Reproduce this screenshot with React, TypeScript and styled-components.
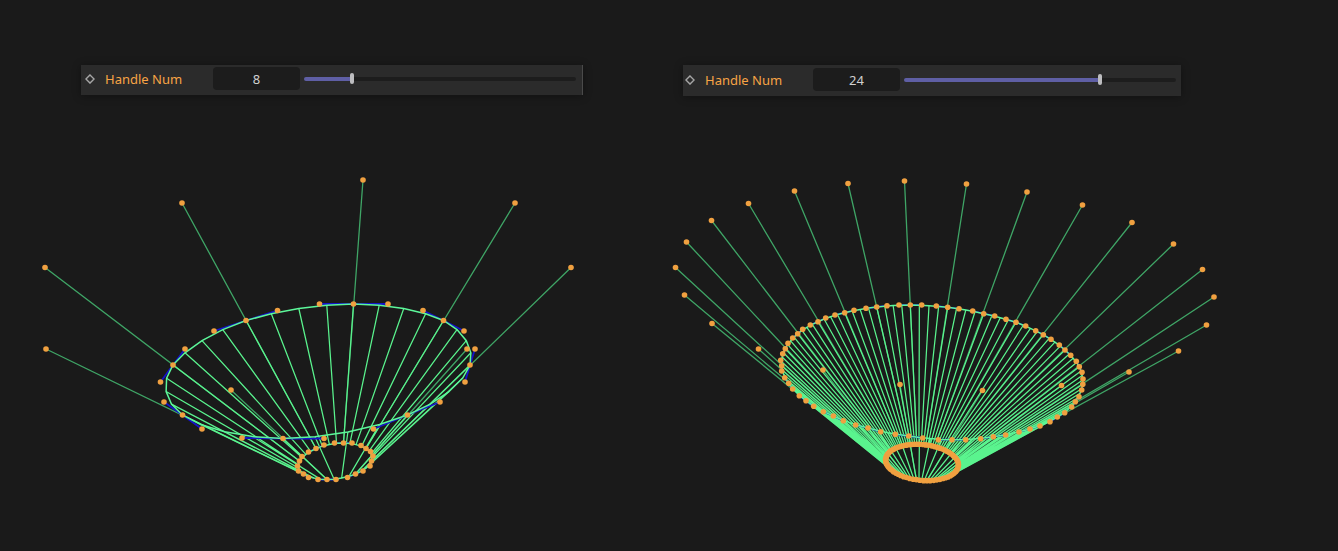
import React, { useId, useState } from "react";
import styled, { createGlobalStyle } from "styled-components";

type Point = [number, number];
/** Spline knot: incoming tangent, anchor, outgoing tangent. */
type Knot = [Point, Point, Point];

const GlobalStyle = createGlobalStyle`
  *, *::before, *::after { box-sizing: border-box; }
  body {
    margin: 0;
    background: #1a1a1a;
    font-family: "Noto Sans", "Open Sans", sans-serif;
  }
`;

const Comparison = styled.main`
  display: grid;
  grid-template-columns: 600fr 738fr;
  align-items: start;
  min-height: 100vh;
  padding-top: 65px;
  background: #1a1a1a;
`;

const Viewport = styled.section`
  display: flex;
  flex-direction: column;
  min-width: 0;
`;

const PropertyRow = styled.div<{ $wide: boolean }>`
  display: flex;
  align-items: center;
  max-width: ${(p) => (p.$wide ? 502 : 498)}px;
  margin: ${(p) => (p.$wide ? "0 16px 0 81px" : "0 16px 0 83px")};
  padding: ${(p) => (p.$wide ? "2px 6px 5px 4px" : "3px 5px 5px 2px")};
  background: #2b2b2b;
  border-right: ${(p) => (p.$wide ? "1px solid #4a4a4a" : "none")};
  box-shadow: 0 1px 8px rgba(0, 0, 0, 0.35);
`;

const KeyframeButton = styled.button`
  display: flex;
  flex: none;
  width: 10px;
  height: 12px;
  padding: 0;
  align-items: center;
  background: none;
  border: 0;
`;

const Label = styled.label`
  flex: none;
  width: 108px;
  padding-left: 10px;
  color: #f8a445;
  font-size: 13px;
  line-height: 20px;
  white-space: nowrap;
`;

const NumberField = styled.input`
  flex: none;
  width: 87px;
  height: 23px;
  margin-left: 10px;
  padding: 0;
  color: #d0d0d0;
  background: #1c1c1c;
  border: 0;
  border-radius: 4px;
  font: 13px/20px "Noto Sans", "Open Sans", sans-serif;
  text-align: center;
`;

const Slider = styled.input<{ $fill: number }>`
  flex: 1;
  min-width: 0;
  height: 11px;
  margin: 0 0 0 4px;
  appearance: none;
  background: transparent;

  &::-webkit-slider-runnable-track {
    height: 4px;
    border-radius: 2px;
    background: linear-gradient(
      to right,
      #5f5fa5 ${(p) => p.$fill}%,
      #1d1d1d ${(p) => p.$fill}%
    );
  }
  &::-webkit-slider-thumb {
    appearance: none;
    width: 4px;
    height: 11px;
    margin-top: -4px;
    border-radius: 2px;
    background: #bdbdc0;
  }
`;

const Drawing = styled.svg`
  display: block;
  width: 100%;
  height: auto;
`;

const MIN = 3;
const MAX = 32;
const STEPS = 4;

const leftRim: Knot[] = [
  [[319.5, 304], [353.5, 304], [388, 304]],
  [[423, 310.5], [443.5, 320.5], [464, 331]],
  [[475, 349], [470, 365], [465, 382]],
  [[440, 402], [407.5, 415], [373.5, 429]],
  [[324, 438.5], [283, 438.5], [242, 438]],
  [[202, 429], [182.5, 415], [164, 402]],
  [[160.5, 382], [173, 365], [185, 349]],
  [[214, 331], [246, 320.5], [277.5, 310.5]],
];

const leftBase: Knot[] = [
  [[334.5, 443], [343.5, 443], [352, 443]],
  [[361, 445.5], [366, 448.5], [370.5, 451.5]],
  [[373, 456], [371.5, 461], [370, 466]],
  [[363, 471], [355.5, 474], [347.5, 477.5]],
  [[336, 479.5], [327, 479.5], [318, 479.5]],
  [[308.5, 477.5], [303.5, 474], [298.5, 471]],
  [[297.5, 466], [299.5, 461], [302, 456.5]],
  [[308.5, 452], [316, 448.5], [324, 445]],
];

const leftTips: Point[] = [
  [363, 180], [515, 203], [571, 267.5], [467, 349],
  [231, 390], [46, 349], [45, 267.5], [182, 203],
];

const rightRim: Knot[] = [
  [[899, 305], [910.3, 305], [921.7, 305]],
  [[936.3, 306], [947.7, 307.3], [959, 308.7]],
  [[972.7, 311], [983.7, 313.7], [994.7, 316]],
  [[1006, 319.3], [1016, 322.3], [1025.7, 326]],
  [[1035.7, 330.7], [1043.3, 334.7], [1051, 339.3]],
  [[1059.3, 345], [1065, 350], [1070.7, 355.3]],
  [[1076.3, 361.3], [1079.3, 366.7], [1082, 372.3]],
  [[1083, 379], [1082.8, 384.3], [1081.7, 390]],
  [[1079, 396.7], [1075.3, 401.7], [1071.7, 407]],
  [[1064.7, 412.7], [1057.3, 417], [1050, 421.7]],
  [[1040, 426], [1030, 429], [1019, 432]],
  [[1005.7, 435], [993.3, 436.7], [980.7, 438.7]],
  [[965.7, 439.7], [952, 439.7], [938.3, 439.7]],
  [[922.7, 438], [908.7, 436], [895.3, 434.3]],
  [[880.7, 431.7], [868, 428], [855.7, 425]],
  [[843.3, 420.7], [833.3, 416], [823.3, 411.7]],
  [[813.7, 406.3], [806, 400.7], [799.3, 395.7]],
  [[792.7, 389], [788.7, 383.3], [784.7, 377.7]],
  [[781.7, 371], [781.7, 365.7], [780.7, 360.3]],
  [[782.7, 353.7], [785.3, 348.7], [788, 343.3]],
  [[792.7, 338], [797.7, 333.7], [802.7, 329.3]],
  [[810.3, 325], [818, 321.7], [825.7, 318]],
  [[835, 315], [844.7, 312.7], [854, 310.3]],
  [[866, 308.3], [876.7, 307], [887, 305.7]],
];

const rightTips: Point[] = [
  [904.5, 181], [966.5, 184], [1027, 192], [1082.5, 205],
  [1132, 222.5], [1173.5, 244], [1202.5, 269.5], [1214, 297],
  [1206.5, 325], [1178.5, 351], [1129, 372], [1061.5, 385.5],
  [982.5, 390.5], [900, 384.5], [823, 370], [758.5, 349],
  [712, 323.5], [684.5, 295], [675.5, 267.5], [686.5, 242],
  [711.5, 220.5], [748.5, 203.5], [794.5, 191], [848, 183.5],
];

const shrink = ([x, y]: Point): Point => [
  922 + (x - 932) * 0.241,
  462.5 + (y - 372.5) * 0.27,
];
const rightBase: Knot[] = rightRim.map(
  (knot) => knot.map(shrink) as Knot
);

function bezier(a: Point, b: Point, c: Point, d: Point, t: number): Point {
  const u = 1 - t;
  const at = (i: 0 | 1) =>
    u * u * u * a[i] + 3 * u * u * t * b[i] + 3 * u * t * t * c[i] + t * t * t * d[i];
  return [at(0), at(1)];
}

function sample(knots: Knot[]): Point[] {
  return knots.flatMap((knot, i) => {
    const next = knots[(i + 1) % knots.length];
    return Array.from({ length: STEPS }, (_, s) =>
      bezier(knot[1], knot[2], next[0], next[1], s / STEPS)
    );
  });
}

const line = (a: Point, b: Point) => `M${a[0]} ${a[1]}L${b[0]} ${b[1]}`;

interface LoftProps {
  title: string;
  viewBox: string;
  rim: Knot[];
  base: Knot[];
  tips: Point[];
}

function Loft({ title, viewBox, rim, base, tips }: LoftProps) {
  const outer = sample(rim);
  const inner = sample(base);
  const loop = (pts: Point[]) => `M${pts.map((p) => p.join(" ")).join("L")}Z`;
  const tangents = (knots: Knot[]) =>
    knots.map((k) => line(k[0], k[1]) + line(k[1], k[2])).join("");

  return (
    <Drawing viewBox={viewBox} role="img" aria-label={title} fill="none">
      <path
        d={tips.map((tip, i) => line(tip, base[i][1])).join("")}
        stroke="#3fa566"
        strokeWidth={1.3}
      />
      <path
        d={outer.map((p, i) => line(p, inner[i])).join("")}
        stroke="#5af48e"
        strokeWidth={1.25}
      />
      <path d={tangents(rim) + tangents(base)} stroke="#1414c8" strokeWidth={1.8} />
      <path d={loop(outer) + loop(inner)} stroke="#5cf79a" strokeWidth={1.5} />
      <g fill="#f0a040">
        {[...rim.flat(), ...base.flat(), ...tips].map(([x, y], i) => (
          <circle key={i} cx={x} cy={y} r={2.8} />
        ))}
      </g>
    </Drawing>
  );
}

function HandleControl({ initial, wide = false }: { initial: number; wide?: boolean }) {
  const [value, setValue] = useState(initial);
  const id = useId();
  const update = (e: React.ChangeEvent<HTMLInputElement>) =>
    setValue(Number(e.target.value) || MIN);

  return (
    <PropertyRow $wide={wide}>
      <KeyframeButton type="button" aria-label="Toggle keyframe">
        <svg width="10" height="10" viewBox="0 0 10 10" fill="none">
          <path d="M5 .9L9.1 5L5 9.1L.9 5Z" stroke="#a6a6a6" strokeWidth="1.4" />
        </svg>
      </KeyframeButton>
      <Label htmlFor={id}>Handle Num</Label>
      <NumberField id={id} type="text" value={value} onChange={update} />
      <Slider
        type="range"
        aria-label="Handle Num slider"
        min={MIN}
        max={MAX}
        value={value}
        onChange={update}
        $fill={((value - MIN) / (MAX - MIN)) * 100}
      />
    </PropertyRow>
  );
}

export default function App() {
  return (
    <>
      <GlobalStyle />
      <Comparison>
        <Viewport>
          <HandleControl initial={8} wide />
          <Loft
            title="Loft with 8 handles"
            viewBox="0 95 600 450"
            rim={leftRim}
            base={leftBase}
            tips={leftTips}
          />
        </Viewport>
        <Viewport>
          <HandleControl initial={24} />
          <Loft
            title="Loft with 24 handles"
            viewBox="600 96 738 450"
            rim={rightRim}
            base={rightBase}
            tips={rightTips}
          />
        </Viewport>
      </Comparison>
    </>
  );
}
